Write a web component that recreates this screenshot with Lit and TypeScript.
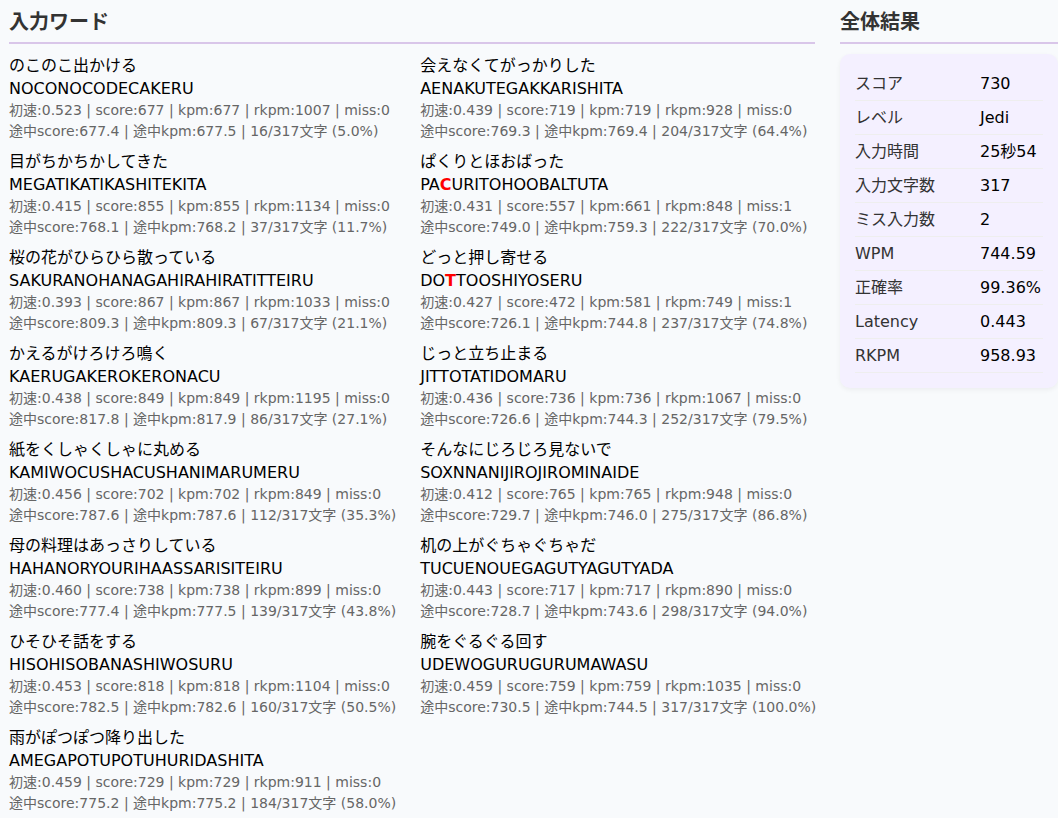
import { LitElement, html, css } from "lit";
import { customElement, property } from "lit/decorators.js";

interface Word {
  kana: string;
  /** Typed keys; a mistyped key is wrapped in square brackets. */
  keys: string;
  latency: string;
  score: number;
  kpm: number;
  rkpm: number;
  miss: number;
  runScore: string;
  runKpm: string;
  typed: number;
  percent: string;
}

const TOTAL = 317;

const word = (
  kana: string, keys: string, latency: string, score: number, kpm: number, rkpm: number,
  miss: number, runScore: string, runKpm: string, typed: number, percent: string,
): Word => ({ kana, keys, latency, score, kpm, rkpm, miss, runScore, runKpm, typed, percent });

const WORDS: Word[] = [
  word("のこのこ出かける", "NOCONOCODECAKERU", "0.523", 677, 677, 1007, 0, "677.4", "677.5", 16, "5.0"),
  word("目がちかちかしてきた", "MEGATIKATIKASHITEKITA", "0.415", 855, 855, 1134, 0, "768.1", "768.2", 37, "11.7"),
  word("桜の花がひらひら散っている", "SAKURANOHANAGAHIRAHIRATITTEIRU", "0.393", 867, 867, 1033, 0, "809.3", "809.3", 67, "21.1"),
  word("かえるがけろけろ鳴く", "KAERUGAKEROKERONACU", "0.438", 849, 849, 1195, 0, "817.8", "817.9", 86, "27.1"),
  word("紙をくしゃくしゃに丸める", "KAMIWOCUSHACUSHANIMARUMERU", "0.456", 702, 702, 849, 0, "787.6", "787.6", 112, "35.3"),
  word("母の料理はあっさりしている", "HAHANORYOURIHAASSARISITEIRU", "0.460", 738, 738, 899, 0, "777.4", "777.5", 139, "43.8"),
  word("ひそひそ話をする", "HISOHISOBANASHIWOSURU", "0.453", 818, 818, 1104, 0, "782.5", "782.6", 160, "50.5"),
  word("雨がぽつぽつ降り出した", "AMEGAPOTUPOTUHURIDASHITA", "0.459", 729, 729, 911, 0, "775.2", "775.2", 184, "58.0"),
  word("会えなくてがっかりした", "AENAKUTEGAKKARISHITA", "0.439", 719, 719, 928, 0, "769.3", "769.4", 204, "64.4"),
  word("ぱくりとほおばった", "PA[C]URITOHOOBALTUTA", "0.431", 557, 661, 848, 1, "749.0", "759.3", 222, "70.0"),
  word("どっと押し寄せる", "DO[T]TOOSHIYOSERU", "0.427", 472, 581, 749, 1, "726.1", "744.8", 237, "74.8"),
  word("じっと立ち止まる", "JITTOTATIDOMARU", "0.436", 736, 736, 1067, 0, "726.6", "744.3", 252, "79.5"),
  word("そんなにじろじろ見ないで", "SOXNNANIJIROJIROMINAIDE", "0.412", 765, 765, 948, 0, "729.7", "746.0", 275, "86.8"),
  word("机の上がぐちゃぐちゃだ", "TUCUENOUEGAGUTYAGUTYADA", "0.443", 717, 717, 890, 0, "728.7", "743.6", 298, "94.0"),
  word("腕をぐるぐる回す", "UDEWOGURUGURUMAWASU", "0.459", 759, 759, 1035, 0, "730.5", "744.5", 317, "100.0"),
];

const RESULTS: [string, string][] = [
  ["スコア", "730"],
  ["レベル", "Jedi"],
  ["入力時間", "25秒54"],
  ["入力文字数", "317"],
  ["ミス入力数", "2"],
  ["WPM", "744.59"],
  ["正確率", "99.36%"],
  ["Latency", "0.443"],
  ["RKPM", "958.93"],
];

@customElement("word-entry")
export class WordEntry extends LitElement {
  static styles = css`
    :host {
      display: block;
      white-space: nowrap;
    }
    .line {
      font-size: 16px;
      line-height: 23px;
      color: #000;
    }
    .stats {
      font-size: 14px;
      line-height: 21px;
      color: #666;
    }
    .miss {
      color: #f00;
      font-weight: bold;
    }
  `;

  @property({ attribute: false }) word!: Word;

  private renderKeys(keys: string) {
    return keys
      .split(/(\[.\])/)
      .map((part) => (part.startsWith("[") ? html`<span class="miss">${part[1]}</span>` : part));
  }

  render() {
    const w = this.word;
    return html`
      <div class="line">${w.kana}</div>
      <div class="line">${this.renderKeys(w.keys)}</div>
      <div class="stats">初速:${w.latency} | score:${w.score} | kpm:${w.kpm} | rkpm:${w.rkpm} | miss:${w.miss}</div>
      <div class="stats">途中score:${w.runScore} | 途中kpm:${w.runKpm} | ${w.typed}/${TOTAL}文字 (${w.percent}%)</div>
    `;
  }
}

@customElement("app-root")
export class AppRoot extends LitElement {
  static styles = css`
    :host {
      display: block;
      box-sizing: border-box;
      min-height: 100vh;
      background: #f8fafc;
      color: #000;
      font-family: "DejaVu Sans", "Noto Sans CJK JP", sans-serif;
      font-size: 16px;
    }
    .page {
      display: grid;
      grid-template-columns: minmax(0, 1fr) 218px;
      column-gap: 25px;
      align-items: start;
      padding-left: 9px;
    }
    .heading {
      margin: 0 0 10px;
      padding: 7px 0 5px;
      border-bottom: 2px solid #d9c6e9;
      color: #333;
      font-size: 20px;
      line-height: 30px;
      font-weight: bold;
    }
    .words {
      display: grid;
      grid-auto-flow: column;
      grid-template-rows: repeat(8, auto);
      grid-auto-columns: max-content;
      gap: 8px 24px;
      margin: 0;
      padding: 0;
      list-style: none;
    }
    .card {
      padding: 13px 15px 15px;
      border-radius: 10px;
      background: #f4f0ff;
      box-shadow: 0 2px 5px rgba(0, 0, 0, 0.05);
    }
    .results {
      width: 100%;
      border-collapse: collapse;
      line-height: 23px;
    }
    .label,
    .value {
      padding: 5px 0;
      border-bottom: 1px solid #eee;
      font-weight: normal;
      text-align: left;
      white-space: nowrap;
    }
    .label {
      color: #333;
    }
    .value {
      width: 63px;
    }
  `;

  render() {
    return html`
      <main class="page" lang="ja">
        <section>
          <h2 class="heading">入力ワード</h2>
          <ol class="words">
            ${WORDS.map((w) => html`<li><word-entry .word=${w}></word-entry></li>`)}
          </ol>
        </section>
        <section>
          <h2 class="heading">全体結果</h2>
          <div class="card">
            <table class="results">
              <tbody>
                ${RESULTS.map(
                  ([label, value]) => html`<tr>
                    <th class="label" scope="row">${label}</th>
                    <td class="value">${value}</td>
                  </tr>`,
                )}
              </tbody>
            </table>
          </div>
        </section>
      </main>
    `;
  }
}
